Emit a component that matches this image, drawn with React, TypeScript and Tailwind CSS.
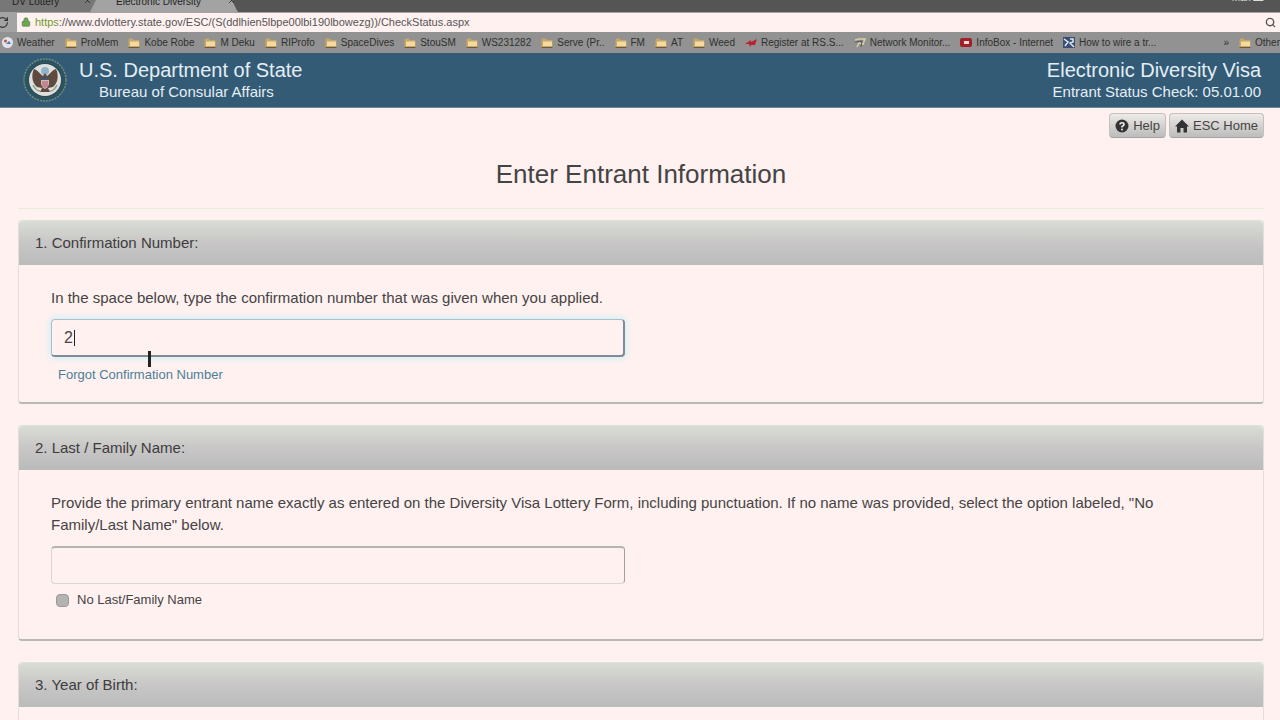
import React, { useState } from 'react';
import { Lock, RotateCw, Search, X } from 'lucide-react';

const folders = ['ProMem', 'Kobe Robe', 'M Deku', 'RIProfo', 'SpaceDives', 'StouSM', 'WS231282', 'Serve (Pr..', 'FM', 'AT', 'Weed'];

function FolderIcon() {
  return (
    <svg width="12" height="10" viewBox="0 0 12 10" className="shrink-0">
      <path d="M0.5 1.5 Q0.5 0.5 1.5 0.5 H4.5 L6 2 H10.5 Q11.5 2 11.5 3 V9.5 H0.5 Z" fill="#c9a768" />
      <path d="M2 3.5 H11 V8 H2 Z" fill="#f3d9a2" />
      <path d="M0.5 9.5 H11.5" stroke="#6f5a35" />
    </svg>
  );
}

function Bookmark({ icon, label }: { icon: React.ReactNode; label: string }) {
  return (
    <a href="#" className="flex shrink-0 items-center gap-1 whitespace-nowrap">
      {icon}
      <span>{label}</span>
    </a>
  );
}

function BrowserChrome() {
  const [url, setUrl] = useState('://www.dvlottery.state.gov/ESC/(S(ddlhien5lbpe00lbi190lbowezg))/CheckStatus.aspx');

  return (
    <div className="shrink-0">
      {/* Tab strip, cut by the top of the window */}
      <div className="relative flex h-3 items-end overflow-hidden bg-[#555] text-[10px] leading-3 text-[#222]">
        <div className="flex w-24 justify-between bg-[#777] pr-1 pl-3">
          <span className="-translate-y-1">DV Lottery</span>
          <X size={9} className="-translate-y-1" />
        </div>
        <svg width="148" height="12" viewBox="0 0 148 12" className="absolute left-[90px]">
          <path d="M0 12 L6 0 H142 Q146 9 148 12 Z" fill="#a3a3a3" />
        </svg>
        <div className="relative flex w-[140px] justify-between pl-5">
          <span className="-translate-y-1">Electronic Diversity</span>
          <X size={9} className="-translate-y-1" />
        </div>
        <div className="ml-auto pr-2 text-[#ddd]">
          <span className="block -translate-y-2">Max ▬ ×</span>
        </div>
      </div>

      {/* Address bar */}
      <div className="flex h-5 items-center bg-[#a3a3a3]">
        <button aria-label="Reload" className="flex w-[17px] justify-start overflow-hidden text-[#333]">
          <RotateCw size={13} className="-ml-1" />
        </button>
        <div className="flex h-[19px] flex-1 items-center bg-[#fff1f0] pr-1 pl-1 text-[11px]">
          <Lock size={10} fill="#6fa653" className="mr-1 text-[#5c8a4c]" />
          <span className="text-[#6f9a2c]">https</span>
          <input
            aria-label="Address"
            value={url}
            onChange={(e) => setUrl(e.target.value)}
            className="min-w-0 flex-1 bg-transparent text-[#555] outline-none"
          />
          <Search size={11} strokeWidth={3} className="text-[#555]" />
        </div>
      </div>

      {/* Bookmarks */}
      <div className="flex h-[21px] items-center gap-[10px] overflow-hidden bg-[#929292] pl-[2px] text-[10px] text-[#303030]">
        <Bookmark
          label="Weather"
          icon={
            <svg width="11" height="11" viewBox="0 0 11 11">
              <circle cx="5.5" cy="5.5" r="5.5" fill="#e3e3ea" />
              <circle cx="3.5" cy="4" r="1.5" fill="#c34b50" />
              <path d="M4 7 L7 4 L9 7 Z" fill="#4b79b5" />
            </svg>
          }
        />
        {folders.map((name) => (
          <Bookmark key={name} label={name} icon={<FolderIcon />} />
        ))}
        <Bookmark
          label="Register at RS.S..."
          icon={
            <svg width="12" height="8" viewBox="0 0 12 8">
              <path d="M0 5 L6 1 L6 3 L12 0 L10 6 L6 6 L5 8 L4 5 Z" fill="#b8232f" />
            </svg>
          }
        />
        <Bookmark
          label="Network Monitor..."
          icon={
            <svg width="12" height="10" viewBox="0 0 12 10">
              <path d="M1 2 L5 1 L11 1 L9 6 L5 5 L3 9" fill="none" stroke="#d8cfa8" strokeWidth="1.5" />
              <path d="M1 4 L8 3 L7 9" fill="none" stroke="#555" />
            </svg>
          }
        />
        <Bookmark
          label="InfoBox - Internet"
          icon={
            <svg width="12" height="9" viewBox="0 0 12 9">
              <rect width="12" height="9" rx="2" fill="#a32029" />
              <rect x="4" y="3" width="5" height="3" fill="#f0dede" />
            </svg>
          }
        />
        <Bookmark
          label="How to wire a tr..."
          icon={
            <svg width="12" height="11" viewBox="0 0 12 11">
              <rect width="12" height="11" fill="#3a4f72" />
              <path d="M1 2 L5 5 L2 9 M7 2 H10 V5 L7 6 L11 10" fill="none" stroke="#dfe6ef" strokeWidth="1.5" />
            </svg>
          }
        />
        <span className="ml-auto">»</span>
        <Bookmark label="Other" icon={<FolderIcon />} />
      </div>
    </div>
  );
}

function Seal() {
  return (
    <svg width="44" height="44" viewBox="0 0 44 44" className="shrink-0">
      <circle cx="22" cy="22" r="21" fill="#2c5361" stroke="#708c7c" strokeWidth="1.5" strokeDasharray="2 1" />
      <circle cx="22" cy="22" r="17" fill="#2f4a55" />
      <circle cx="22" cy="22" r="16" fill="#dfe0de" />
      <circle cx="22" cy="13" r="4" fill="#8fb2cd" />
      <path d="M20 18 C17 16 15 12 11 11 C8 17 9 25 14 29 L19 30 L17 34 H27 L25 30 L30 29 C35 25 36 17 33 11 C29 12 27 16 24 18 L22 15 Z" fill="#5e4a3f" />
      <path d="M18 20 H26 V26 Q25 30 22 31 Q19 30 18 26 Z" fill="#d3b9bb" />
      <path d="M20 23 V29 M22 23 V30 M24 23 V29" stroke="#b0525c" />
      <path d="M18 20 H26 V22 H18 Z" fill="#3f5677" />
      <path d="M10 27 Q13 33 17 33 M34 27 Q31 33 27 33" fill="none" stroke="#8d9f80" strokeWidth="1.5" />
    </svg>
  );
}

function SiteHeader() {
  return (
    <header className="flex h-[55px] items-center justify-between border-b border-[#6d8790] bg-[#335b76] pr-[19px] pl-[23px] text-[#e4eef5]">
      <div className="flex items-center gap-3">
        <Seal />
        <div>
          <p className="text-xl leading-6">U.S. Department of State</p>
          <p className="pl-5 text-[15px] leading-5">Bureau of Consular Affairs</p>
        </div>
      </div>
      <div className="text-right">
        <p className="text-xl leading-6">Electronic Diversity Visa</p>
        <p className="text-[15px] leading-5">Entrant Status Check: 05.01.00</p>
      </div>
    </header>
  );
}

function ToolButton({ icon, children }: { icon: React.ReactNode; children: React.ReactNode }) {
  return (
    <button className="flex h-[25px] items-center gap-1 rounded border border-[#c3c0be] border-b-[#a3a3a3] bg-linear-to-b from-[#eeebe8] to-[#bcbcbc] px-[5px] text-[13px] text-[#444]">
      {icon}
      {children}
    </button>
  );
}

function Panel({ title, children }: { title: string; children?: React.ReactNode }) {
  return (
    <section className="rounded border border-[#dfe0d8] border-b-2 border-b-[#b9b9b4]">
      <h2 className="rounded-t-sm bg-linear-to-b from-[#d9ddd5] via-[#c8c6c6] to-[#bbb] px-4 py-3 text-[15px] leading-5 text-[#3d3d3d]">
        {title}
      </h2>
      <div className="px-8 pt-[22px]">{children}</div>
    </section>
  );
}

export default function App() {
  const [confirmation, setConfirmation] = useState('2');
  const [lastName, setLastName] = useState('');
  const [noName, setNoName] = useState(false);

  return (
    <div className="flex h-screen flex-col overflow-hidden bg-[#fff1f0] font-['Liberation_Sans',Arial,sans-serif] text-[#444]">
      <BrowserChrome />
      <div className="flex-1 overflow-hidden">
        <SiteHeader />
        <main className="pr-4 pl-[18px]">
          <nav className="flex justify-end gap-[3px] pt-[5px]">
            <ToolButton
              icon={
                <svg width="14" height="14" viewBox="0 0 14 14">
                  <circle cx="7" cy="7" r="6.5" fill="#333" />
                  <path d="M5 5.5 Q5 3.8 7 3.8 Q9 3.8 9 5.4 Q9 6.5 7 7.4 V8.4" fill="none" stroke="#eee" strokeWidth="1.6" />
                  <circle cx="7" cy="10.4" r="1" fill="#eee" />
                </svg>
              }
            >
              Help
            </ToolButton>
            <ToolButton
              icon={
                <svg width="14" height="14" viewBox="0 0 14 14">
                  <path d="M7 0.5 L14 7.5 H12 V13.5 H8.5 V9 H5.5 V13.5 H2 V7.5 H0 Z" fill="#333" />
                </svg>
              }
            >
              ESC Home
            </ToolButton>
          </nav>

          <h1 className="mt-5 mb-[18px] text-center text-[26px] leading-8">Enter Entrant Information</h1>
          <hr className="border-[#e6efd9]" />

          <form className="mt-[11px] flex flex-col gap-[21px]">
            <Panel title="1. Confirmation Number:">
              <label htmlFor="confirmation" className="block text-[15px] leading-[22px]">
                In the space below, type the confirmation number that was given when you applied.
              </label>
              <div className="relative mt-[10px] w-full max-w-[574px]">
                <input
                  id="confirmation"
                  value={confirmation}
                  onChange={(e) => setConfirmation(e.target.value)}
                  className="block h-[38px] w-full rounded border border-[#a9c0cb] border-r-2 border-r-[#7f8b96] border-b-2 border-b-[#7f8b96] px-3 text-base shadow-[0_0_6px_2px_#d3f0f4] outline-none"
                />
                <span className="absolute top-[11px] left-[23px] h-4 w-px bg-[#222]" />
                <span className="absolute top-8 left-[97px] h-4 w-[3px] bg-[#222]" />
              </div>
              <a href="#" className="mt-2 mb-[17px] inline-block pl-[7px] text-[13px] leading-5 text-[#4b7f96]">
                Forgot Confirmation Number
              </a>
            </Panel>

            <Panel title="2. Last / Family Name:">
              <label htmlFor="last-name" className="block text-[15px] leading-[22px]">
                Provide the primary entrant name exactly as entered on the Diversity Visa Lottery Form, including
                punctuation. If no name was provided, select the option labeled, "No Family/Last Name" below.
              </label>
              <input
                id="last-name"
                value={lastName}
                onChange={(e) => setLastName(e.target.value)}
                className="mt-[10px] block h-[38px] w-full max-w-[574px] rounded border border-[#d5d8ca] border-t-2 border-t-[#b5b5b0] border-r-[#a0a0a0] px-3 text-base outline-none"
              />
              <label className="mt-[6px] mb-[29px] flex items-center gap-2 pl-[5px] text-[13px] leading-5">
                <input
                  type="checkbox"
                  checked={noName}
                  onChange={(e) => setNoName(e.target.checked)}
                  className="h-[13px] w-[13px] appearance-none rounded-sm border border-[#999] bg-[#b3b3b3] checked:bg-[#555]"
                />
                No Last/Family Name
              </label>
            </Panel>

            <Panel title="3. Year of Birth:">
              <label htmlFor="birth-year" className="block text-[15px] leading-[22px]">
                Year of Birth
              </label>
              <input id="birth-year" className="mt-[10px] mb-6 block h-[38px] w-full max-w-[574px] rounded border border-[#d5d8ca] px-3" />
            </Panel>
          </form>
        </main>
      </div>
    </div>
  );
}
